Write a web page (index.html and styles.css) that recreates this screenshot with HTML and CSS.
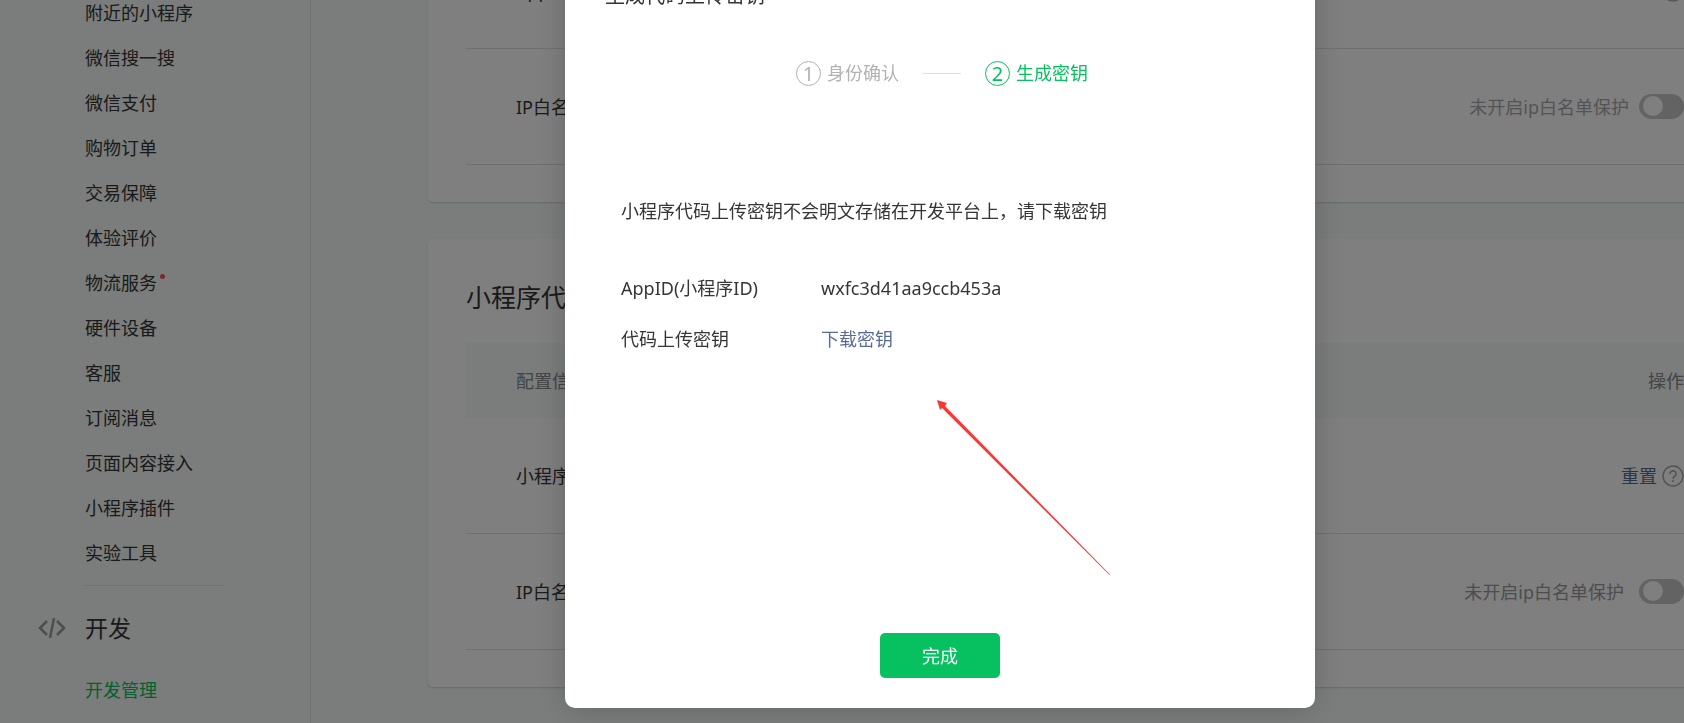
FILE: index.html
```html
<!DOCTYPE html>
<html lang="zh-CN">
<head>
  <meta charset="UTF-8" />
  <meta name="viewport" content="width=device-width, initial-scale=1.0"/>
  <title>开发管理</title>
  <link rel="stylesheet" href="styles.css">
</head>
<body>

  <div class="page">
    <!-- Sidebar -->
    <nav class="sidebar">
      <ul class="menu">
        <li><a href="#">附近的小程序</a></li>
        <li><a href="#">微信搜一搜</a></li>
        <li><a href="#">微信支付</a></li>
        <li><a href="#">购物订单</a></li>
        <li><a href="#">交易保障</a></li>
        <li><a href="#">体验评价</a></li>
        <li><a href="#" class="has-dot">物流服务</a></li>
        <li><a href="#">硬件设备</a></li>
        <li><a href="#">客服</a></li>
        <li><a href="#">订阅消息</a></li>
        <li><a href="#">页面内容接入</a></li>
        <li><a href="#">小程序插件</a></li>
        <li><a href="#">实验工具</a></li>
      </ul>
      <hr class="menu-line">
      <h2 class="menu-title">
        <svg class="icon-code" viewBox="0 0 28 20" fill="none" stroke="currentColor" stroke-width="2.500" aria-hidden="true">
          <path d="M9 3 2 10l7 7M19 3l7 7-7 7M16 0l-4 20"/>
        </svg>
        开发
      </h2>
      <ul class="menu">
        <li><a href="#" class="active">开发管理</a></li>
      </ul>
    </nav>

    <!-- Content -->
    <main class="main">
      <section class="card">
        <table class="config">
          <tbody>
            <tr>
              <td>AppID(小程序ID)</td>
              <td>
                <div class="ops">
                  <svg class="icon-help" viewBox="0 0 22 22" fill="none" stroke="currentColor" stroke-width="1.500" aria-hidden="true">
                    <circle cx="11" cy="11" r="10"/>
                    <path d="M8 9a3 3 0 1 1 4.500 2.500c-1 .6-1.500 1-1.500 2.200M11 15v2"/>
                  </svg>
                </div>
              </td>
            </tr>
            <tr>
              <td>IP白名单</td>
              <td>
                <div class="ops">
                  <label class="hint light" for="ip1">未开启ip白名单保护</label>
                  <input class="switch" type="checkbox" id="ip1">
                </div>
              </td>
            </tr>
          </tbody>
        </table>
      </section>

      <section class="card">
        <h1 class="card-title">小程序代码上传</h1>
        <table class="config">
          <thead>
            <tr><th>配置信息</th><th>操作</th></tr>
          </thead>
          <tbody>
            <tr>
              <td>小程序代码上传密钥</td>
              <td>
                <div class="ops">
                  <a href="#" class="link">重置</a>
                  <svg class="icon-help" viewBox="0 0 22 22" fill="none" stroke="currentColor" stroke-width="1.500" aria-hidden="true">
                    <circle cx="11" cy="11" r="10"/>
                    <path d="M8 9a3 3 0 1 1 4.500 2.500c-1 .6-1.500 1-1.500 2.200M11 15v2"/>
                  </svg>
                </div>
              </td>
            </tr>
            <tr>
              <td>IP白名单</td>
              <td>
                <div class="ops wide">
                  <label class="hint" for="ip2">未开启ip白名单保护</label>
                  <input class="switch" type="checkbox" id="ip2">
                </div>
              </td>
            </tr>
          </tbody>
        </table>
      </section>
    </main>
  </div>

  <!-- Dialog -->
  <div class="mask">
    <div class="dialog" role="dialog" aria-labelledby="dialogTitle">
      <h3 class="dialog-title" id="dialogTitle">生成代码上传密钥</h3>
      <ol class="steps">
        <li class="step"><span class="num">1</span>身份确认</li>
        <li class="step-line" aria-hidden="true"></li>
        <li class="step current"><span class="num">2</span>生成密钥</li>
      </ol>
      <div class="dialog-body">
        <p class="desc">小程序代码上传密钥不会明文存储在开发平台上，请下载密钥</p>
        <dl class="info">
          <dt>AppID(小程序ID)</dt>
          <dd>wxfc3d41aa9ccb453a</dd>
          <dt>代码上传密钥</dt>
          <dd><a href="#" class="link">下载密钥</a></dd>
        </dl>
      </div>
      <div class="dialog-foot">
        <button class="btn" type="button">完成</button>
      </div>
      <svg class="arrow" viewBox="0 0 173 175" aria-hidden="true">
        <path fill="#fb3734" d="M0 0 10 3 8 6 173 174.500 172.500 175 5 8 3 10Z"/>
      </svg>
    </div>
  </div>

</body>
</html>
```
FILE: styles.css
```css
* { box-sizing: border-box; margin: 0; padding: 0; }
body {
  font-family: "Noto Sans", "Noto Sans CJK SC", sans-serif;
  font-size: 18px;
  line-height: 26px;
  color: #353535;
  background: #f5faf7;
  height: 100vh;
  overflow: hidden;
}
h1, h2, h3, th { font-weight: 400; }
ul, ol { list-style: none; }
a { color: inherit; text-decoration: none; }
.link { color: #576b95; }

.page { display: flex; height: 100vh; overflow: hidden; }

/* sidebar */
.sidebar {
  flex: none; width: 311px; border-right: 1px solid #e2e6e4;
}
.sidebar > .menu:first-child { margin-top: -9px; }
.menu { padding-left: 85px; }
.menu a { display: inline-block; line-height: 45px; position: relative; }
.menu .active { color: #07c160; }
.has-dot::after {
  content: ""; position: absolute; top: 13px; right: -8px;
  width: 5px; height: 5px; border-radius: 50%; background: #fa5151;
}
.menu-line { width: 138px; margin: 9px 0 27px 85px; border: 0; border-top: 1px solid #e0e4e2; }
.menu-title {
  display: flex; align-items: center; gap: 19px;
  padding-left: 38px; margin-bottom: 25px;
  font-size: 23px; line-height: 30px;
}
.icon-code { width: 28px; height: 20px; color: #9a9a9a; }

/* cards, scrolled part way down */
.main { flex: 1; margin-top: -67px; padding-left: 117px; }
.card {
  margin: 0 -38px 37px 0; padding: 0 38px 37px; background: #fff;
  border-radius: 5px; box-shadow: 0 1px 2px rgba(0,0,0,0.15);
}
.card-title { padding-top: 38px; margin-bottom: 26px; font-size: 25px; line-height: 40px; }
.config { width: 100%; border-spacing: 0; }
.config th {
  height: 75px; background: #f5faf7; color: #888;
  text-align: left;
}
.config td { height: 116px; border-bottom: 1px solid #dfe3e1; }
.config th:first-child, .config td:first-child { padding-left: 50px; }
.config th:last-child { text-align: right; }
.ops { display: flex; align-items: center; justify-content: flex-end; gap: 5px; }
.hint { margin-right: 5px; color: #9a9a9a; }
.hint.light { color: #a8a8a8; }
.wide .hint { margin-right: 10px; }
.icon-help { width: 22px; height: 22px; color: #a8a8a8; }
.switch {
  appearance: none; width: 45px; height: 25px; padding: 2px 4px;
  border-radius: 13px; background: #c6c6c6; cursor: pointer;
}
.switch::before {
  content: ""; display: block; width: 20px; height: 20px;
  border-radius: 50%; background: #fff;
}
.switch:checked { background: #07c160; }
.switch:checked::before { margin-left: auto; }

/* dialog */
.mask {
  position: fixed; inset: 0; overflow: hidden;
  display: flex; justify-content: center; align-items: flex-end;
  padding: 0 0 15px 196px;
  background: rgba(0,0,0,0.5);
}
.dialog {
  position: relative; width: 750px; padding: 24px 40px 30px;
  background: #fff; border-radius: 10px;
  box-shadow: 0 0 30px rgba(0,0,0,0.2);
}
.dialog-title { margin-bottom: 50px; font-size: 20px; line-height: 28px; }
.steps {
  display: flex; justify-content: center; align-items: center; gap: 24px;
  margin-bottom: 112px; padding-left: 4px;
}
.step { display: flex; align-items: center; gap: 6px; color: #b2b2b2; }
.step.current { color: #07c160; }
.num {
  width: 25px; height: 25px; border: 1px solid currentColor; border-radius: 50%;
  font-size: 20px; line-height: 23px; text-align: center;
}
.step-line { width: 38px; height: 1px; background: #e0e0e0; }
.dialog-body { padding: 0 16px 281px; }
.desc { margin-bottom: 51px; }
.info { display: grid; grid-template-columns: 200px 1fr; row-gap: 25px; }
.dialog-foot { text-align: center; }
.btn {
  display: block; width: 120px; height: 45px; margin: 0 auto;
  border: none; border-radius: 5px; background: #07c160; color: #fff;
  font: inherit; cursor: pointer;
}
/* points at the download link */
.arrow { position: absolute; left: 372px; bottom: 133px; width: 173px; height: 175px; }
```
